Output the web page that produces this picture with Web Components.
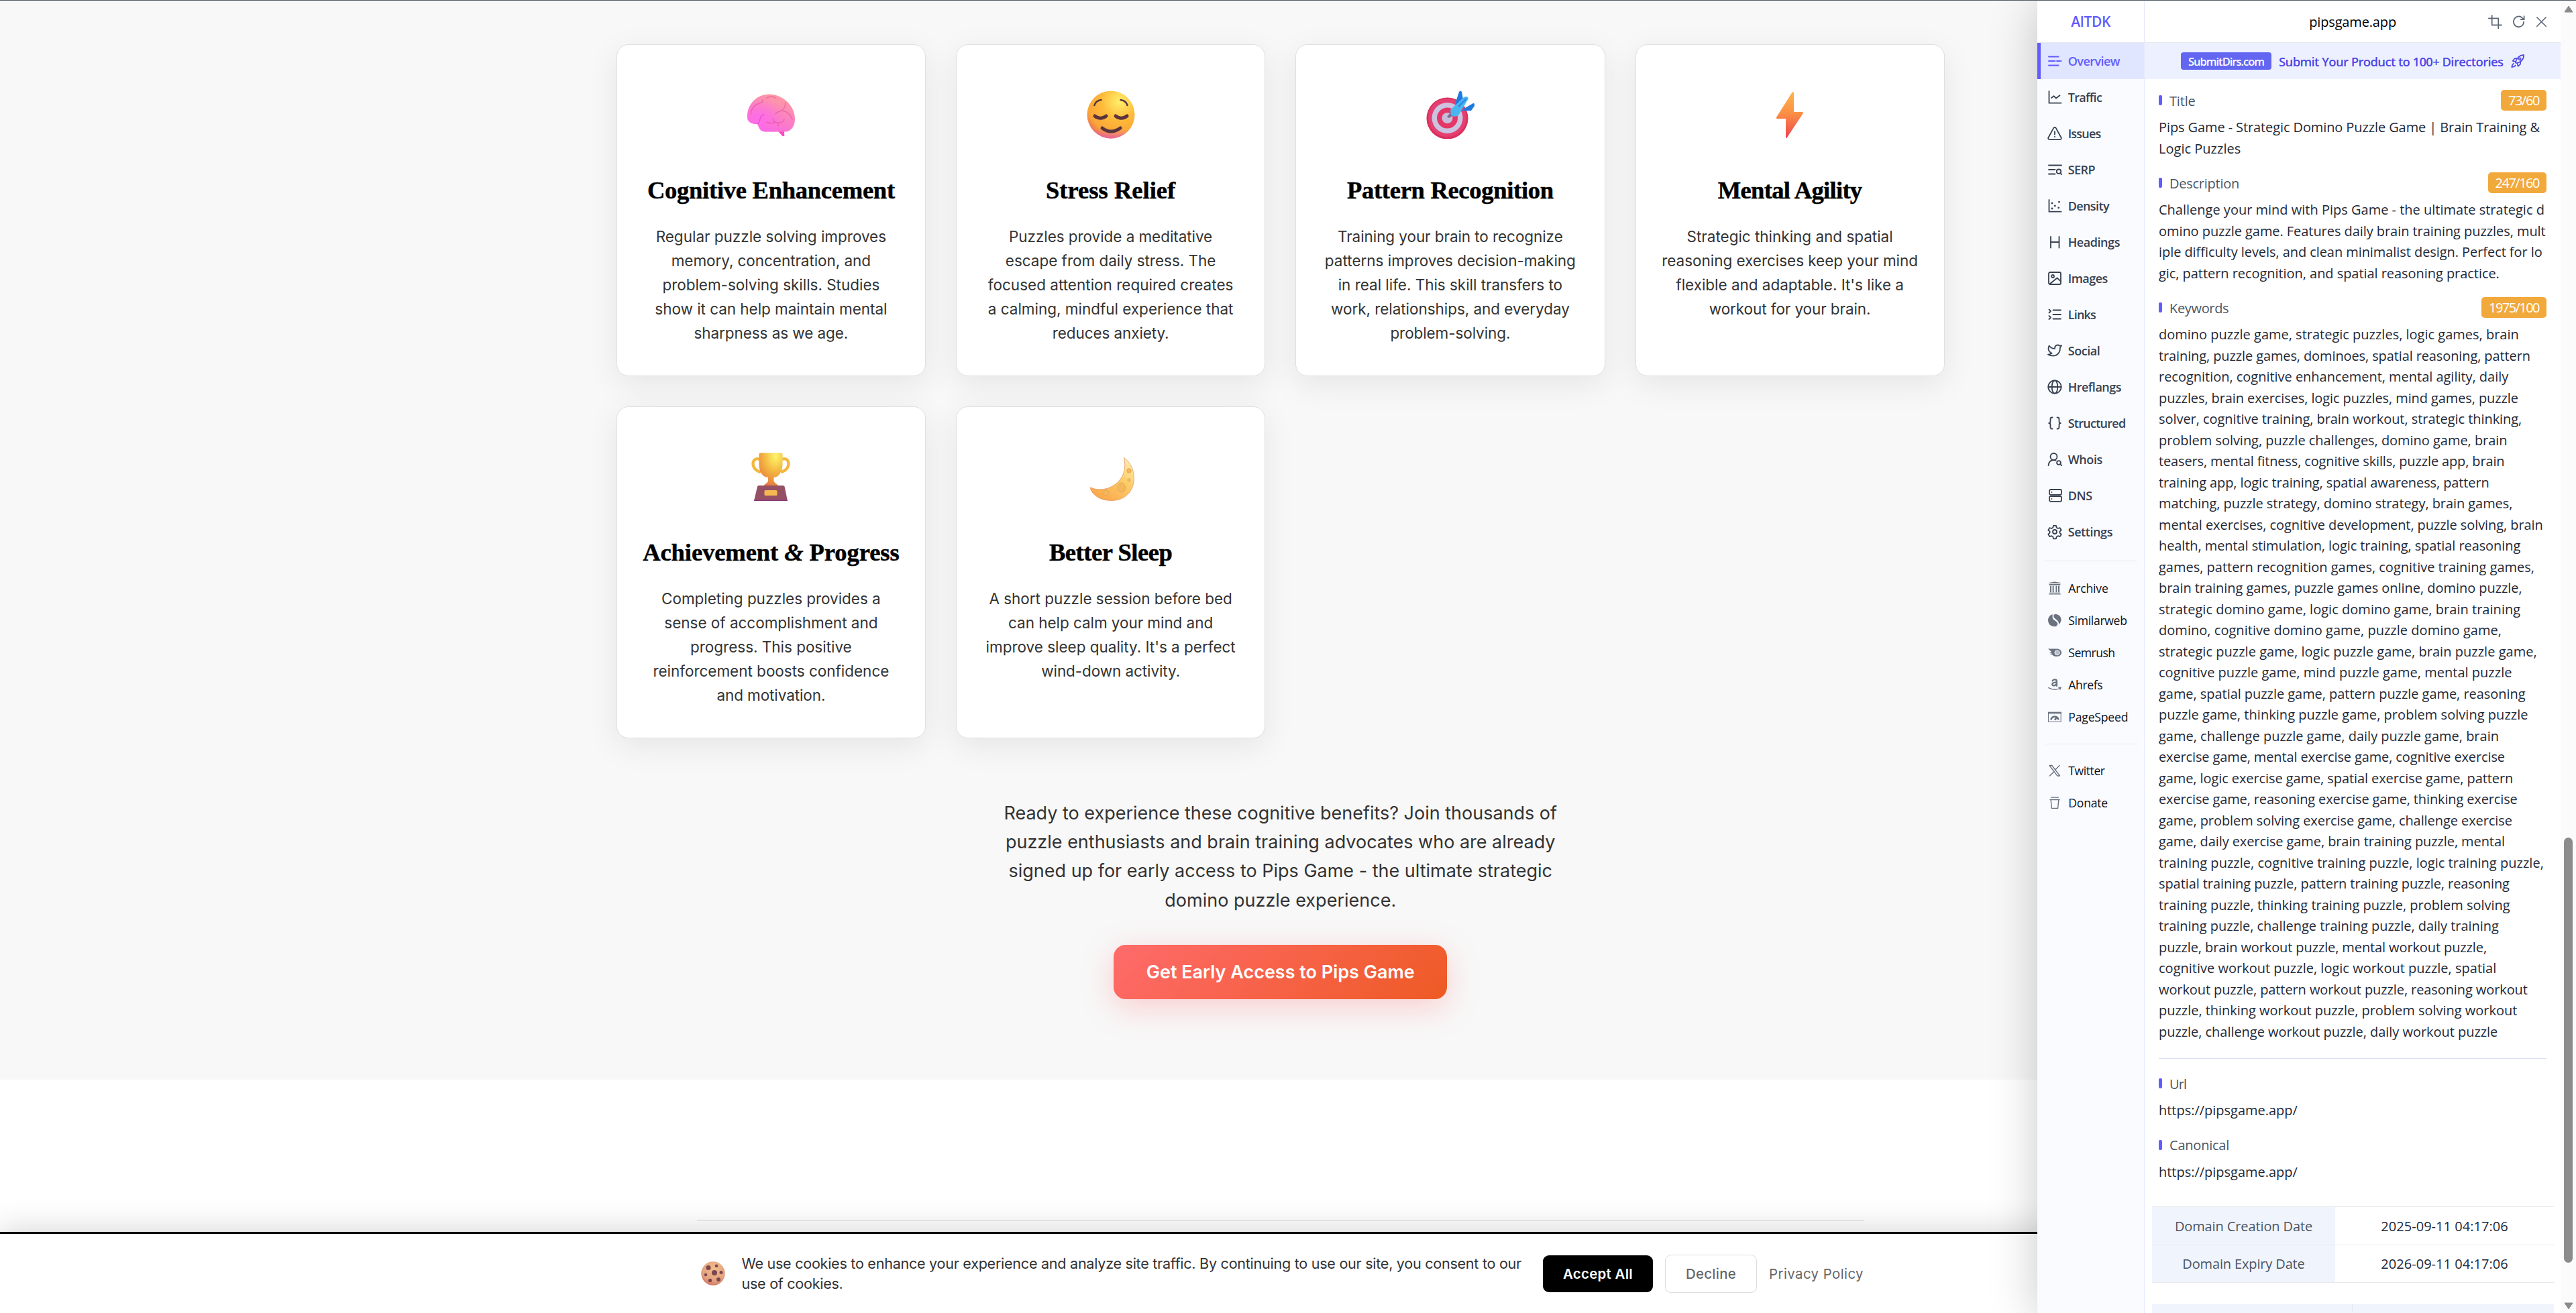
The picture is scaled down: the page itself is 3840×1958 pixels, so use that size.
<!DOCTYPE html>
<html lang="en">
<head>
<meta charset="utf-8">
<title>Pips Game</title>
<style>
html,body{margin:0;height:1958px;overflow:hidden}
body{font-family:Inter,sans-serif;background:#fff;width:3840px}
</style>
</head>
<body>
<pips-app></pips-app>
<script>
const define=(name,html,setup)=>customElements.define(name,class extends HTMLElement{
  constructor(){super();this.attachShadow({mode:'open'});}
  connectedCallback(){
    if(this.ready)return;this.ready=true;
    this.shadowRoot.innerHTML=typeof html==='function'?html(this):html;
    if(setup)setup(this);
  }
});

/* ---------- pictures ---------- */
const EMOJI={
brain:`<defs><linearGradient id="a" x1=".75" y1="0" x2=".3" y2="1"><stop offset="0" stop-color="#ff9e9e"/><stop offset=".45" stop-color="#fb86bd"/><stop offset="1" stop-color="#fb67e2"/></linearGradient><radialGradient id="b" cx=".25" cy=".65" r=".5"><stop offset="0" stop-color="#ff6ce8"/><stop offset="1" stop-color="#ff6ce8" stop-opacity="0"/></radialGradient></defs>
<path d="M46 60h10l.3 7.500q-2.800 2-4.500-1.500z" fill="#fb4bbd"/>
<path d="M1 39C1 20 15 5.500 34 5.500S72 22 72 42c0 12-6 19.500-16 19.500H28c-7 0-10-5-11.500-11.500C7 50.500 1 47 1 39z" fill="url(#a)"/><path d="M1 39C1 20 15 5.500 34 5.500S72 22 72 42c0 12-6 19.500-16 19.500H28c-7 0-10-5-11.500-11.500C7 50.500 1 47 1 39z" fill="url(#b)"/>
<g fill="none" stroke="#e8549c" stroke-width="1.500" stroke-linecap="round" opacity=".65"><path d="M6 35c1-8 6-14 13-16 4-1 7-3 4-5M30 11q7-4 13 0M58 18q-1 10-6 12-6 1-9 5M53 30q11 2 15 13M30 47q8 4 13-1M39 42q2 7 9 6 6 0 8-5M47 48v5"/><path d="M16 50c6-3 1-12 10-14" stroke="#d94bd0"/></g>`,
calm:`<defs><radialGradient id="a" cx=".68" cy=".22" r=".85"><stop offset="0" stop-color="#fff06b"/><stop offset=".45" stop-color="#ffba3a"/><stop offset=".8" stop-color="#fba637"/><stop offset="1" stop-color="#e76b5f"/></radialGradient><linearGradient id="b" x1="0" y1="0" x2="0" y2="1"><stop offset=".8" stop-color="#e85fb0" stop-opacity="0"/><stop offset="1" stop-color="#e85fb0" stop-opacity=".8"/></linearGradient></defs>
<circle cx="36" cy="36" r="35.500" fill="url(#a)"/><circle cx="36" cy="36" r="35.500" fill="url(#b)"/>
<g fill="none" stroke="#59343f" stroke-linecap="round"><path d="M11.500 22q2-7 10-8M60.500 22q-2-7-10-8" stroke-width="2.600"/><path d="M12 38q8.500 6.500 17 0M43 38q8.500 6.500 17 0" stroke-width="5"/><path d="M23 56q13 10 27 0" stroke-width="5"/></g>`,
target:`<circle cx="31.500" cy="41.500" r="31" fill="#d8315e"/><circle cx="31.500" cy="40.500" r="28.500" fill="#e53e70"/><circle cx="31.500" cy="41" r="23" fill="#cbc3df"/><circle cx="31.500" cy="41" r="15.500" fill="#e53668"/><circle cx="31.500" cy="41" r="8" fill="#c6bddb"/>
<path d="M31 39l8-9 4 5-9 6z" fill="#7d6a91"/><path d="M44 17L49 2q2-3 4 0l2 11-10 16zM56 27l14-8q3 0 2 4l-5 7-14 0z" fill="#1f79df"/><path d="M36 29L56 10q6-3 7 2L48 37q-7 4-11-1z" fill="#4ab6f0"/><path d="M48 24L60 12" stroke="#2a8be8" stroke-width="2.500"/>`,
bolt:`<defs><linearGradient id="a" x1="0" y1="0" x2="0" y2="1"><stop offset="0" stop-color="#ffb24a"/><stop offset=".45" stop-color="#fb9145"/><stop offset="1" stop-color="#ee4350"/></linearGradient></defs><path d="M39 3.500q1-1.700 2-1.500 1 .3 1 2V32h13q1.500.3.800 2L32 70q-1 1.500-2 .800V42H17q-1.800-.5-1-2z" fill="url(#a)"/>`,
trophy:`<defs><radialGradient id="a" cx=".7" cy=".1" r="1"><stop offset="0" stop-color="#fff56a"/><stop offset=".5" stop-color="#f2b440"/><stop offset="1" stop-color="#e5723f"/></radialGradient></defs>
<path d="M19 10c-11-5-15 15 2 19M53 10c11-5 15 15-2 19" fill="none" stroke="#f3b83d" stroke-width="4.200"/>
<path d="M18.500 2q0-1.500 2-1.500h31q2 0 2 1.500v16c0 10-6 19-13 19v5c0 3 6 5 6 7H26c0-2 6-4 6-7v-5c-8 0-13.500-9-13.500-19z" fill="url(#a)"/>
<path d="M18 49q-1.500 0-2 1.500L11 72h50l-4.500-21.500Q56 49 54 49z" fill="#955063"/><path d="M11.500 70h49l.5 2H11z" fill="#8b3c78"/><rect x="26.500" y="56" width="19" height="8" rx="1.500" fill="#f6b851"/>`,
moon:`<defs><linearGradient id="a" x1=".9" y1="0" x2=".2" y2="1"><stop offset="0" stop-color="#fff0b0"/><stop offset=".45" stop-color="#fccb67"/><stop offset="1" stop-color="#fba44b"/></linearGradient></defs>
<path d="M55.500 7.500c24 17 20 64-19 64C20 71.500 8 63 5 52.500q.8-1 2 0C30 62 64 43 55.500 7.500z" fill="url(#a)" stroke="#e59763" stroke-width=".8"/><g fill="#f4b85b" stroke="#e0a250" stroke-width=".7"><ellipse cx="51.500" cy="52" rx="6" ry="7"/><circle cx="29" cy="60" r="4"/><circle cx="63" cy="27" r="3.300"/><circle cx="63" cy="41" r="2.200"/></g>`,
cookie:`<defs><radialGradient id="a" cx=".55" cy=".3" r=".75"><stop offset="0" stop-color="#f2bc8c"/><stop offset=".7" stop-color="#e2a17e"/><stop offset="1" stop-color="#cf6a5e"/></radialGradient></defs><circle cx="36" cy="36" r="35.500" fill="url(#a)"/><g fill="#7a4650"><circle cx="22" cy="19" r="7"/><circle cx="46" cy="13.500" r="4.500"/><circle cx="40" cy="34" r="8"/><circle cx="60" cy="33" r="5"/><circle cx="14" cy="40" r="4.500"/><circle cx="27" cy="57" r="5.500"/><circle cx="52" cy="54" r="6"/></g>`};
define('emoji-pic',el=>`<style>:host{display:block;width:72px;height:72px;flex:none}svg{display:block;width:100%;height:100%}</style><svg viewBox="0 0 72 72">${EMOJI[el.getAttribute('name')]}</svg>`);

const ICON={
overview:'<path d="M3 5.500h14.500M3 12h9.500M15 12h6.500M3 18.500h14.500"/>',
traffic:'<path d="M3.500 3v17.700H21.500M7 13l3.500-2.800L14 13.500l5.500-4.300"/>',
issues:'<path d="M10.300 3.900L2.400 18.200a2 2 0 0 0 1.700 2.900h15.800a2 2 0 0 0 1.700-2.900L13.700 3.900a2 2 0 0 0-3.400 0zM12 9v4.500M12 16.700v.4"/>',
serp:'<path d="M3 5.500h19M3 12h9.500M3 18.500h9.500"/><circle cx="18" cy="14.700" r="3.200"/><path d="M20.300 17l2 2.200"/>',
density:'<path d="M3.500 3v17.700H21.500"/><g fill="currentColor" stroke="none"><circle cx="8" cy="8" r="1.400"/><circle cx="18.500" cy="6.200" r="1.400"/><circle cx="12.300" cy="12" r="1.400"/><circle cx="8" cy="16" r="1.400"/><circle cx="17.700" cy="14.800" r="1.400"/></g>',
headings:'<path d="M6 4v16.500M18.500 4v16.500M6 12h12.500"/>',
images:'<rect x="3" y="3" width="18" height="18" rx="2"/><circle cx="9" cy="9" r="2"/><path d="M4.500 20.500L15.500 11.500 21 16.500"/>',
links:'<path d="M9.500 5.500h11.500M9.500 12h11.500M9.500 18.500h11.500M3.500 4.500l2.500 2.500-2.500 2.500M3.500 14l2.500 2.500-2.500 2.500"/>',
social:'<path d="M22 4c-1 .5-2 .7-3 .6-1.300-1.300-3-1.300-4.500-.7-1.600.8-2.500 2.200-2.400 4.200v.8c-3.500.1-6.500-1.500-8.500-4.300 0 0-4.200 7.600 4 11.200-1.600 1.100-3.500 1.900-5.600 1.800 8.500 4.600 17.500.8 17.900-8.300 0-.8 0-1.300-.1-1.600C20.900 6.500 21.600 5.400 22 4z"/>',
globe:'<circle cx="12" cy="12" r="9.700"/><ellipse cx="12" cy="12" rx="4.300" ry="9.700"/><path d="M2.500 12h19"/>',
braces:'<path d="M8.500 3.500H8c-1.700 0-2.500.9-2.500 2.500v3.500c0 1.500-.7 2.500-2.300 2.500 1.600 0 2.300 1 2.300 2.500V18c0 1.600.8 2.500 2.500 2.500h.5M15.500 3.500h.5c1.700 0 2.500.9 2.500 2.500v3.500c0 1.500.7 2.500 2.300 2.500-1.600 0-2.300 1-2.300 2.500V18c0 1.600-.8 2.500-2.500 2.500h-.5"/>',
whois:'<circle cx="10.500" cy="8" r="5"/><path d="M2.500 21c.6-5 3.700-8 8-8 1 0 2 .2 3 .5"/><circle cx="18" cy="17" r="2.900"/><path d="M20.200 19.200l2 2"/>',
dns:'<rect x="4" y="3" width="18" height="7.800" rx="2"/><rect x="4" y="13" width="18" height="7.800" rx="2"/><path d="M7.500 7v.1M7.500 17v.1"/>',
settings:'<circle cx="12" cy="12" r="3"/><path d="M10 2.800h4l.7 3 2 1.200 3-.9 2 3.400-2.300 2.100v2l2.300 2.100-2 3.400-3-.9-2 1.200-.7 3h-4l-.7-3-2-1.200-3 .9-2-3.400 2.300-2.100v-2L2.300 9.500l2-3.400 3 .9 2-1.200z"/>',
crop:'<path d="M6.500 1v16.500H23M1 6h16.500v17"/>',
refresh:'<path d="M20.700 12a8.700 9 0 1 1-2.700-6.700l3 2.700M21.300 2.500V8h-5.800"/>',
close:'<path d="M3.500 3.500l17 17M20.500 3.500l-17 17"/>',
rocket:'<path d="M8.500 14.500C10 8 14 2.500 22 2c0 7-4.500 12-12 13.500zM8.500 13L4 12l3-4 4-.5M11.500 15.500l1 5 4-3.500.3-4M5.500 16c-2 1-2.700 3-3 6 3-.3 5-1 6-3"/><circle cx="15.500" cy="8.500" r="1.700"/>',
archive:'<g fill="currentColor" stroke="none"><path d="M1.500 2.500L12 .5l10.500 2v1.200h-21zM2 4.700h20v2.300H2zM3.500 8H6v11.500H3.500zM8 8h2.300v11.500H8zM13.700 8H16v11.500h-2.300zM18 8h2.500v11.500H18zM2.500 20h19v1H2.500zM1.500 21.800h21v1.500h-21z"/></g>',
similarweb:'<g fill="currentColor" stroke="none"><path d="M8 1.200C-2.500 4.500-2 18.500 6 22c5 2.500 12 1 11-4.500-1-4-8.500-5.500-9-10.500-.2-2.500 0-4 0-5.800z"/><path d="M12.500.8c-3 1.200-3.500 4.200-1.500 6.700s9.500 5.500 8 12C26 15 25.500 1.500 12.500.8z"/></g>',
semrush:'<g fill="currentColor" stroke="none"><path fill-rule="evenodd" d="M0 5.500H17a7 6.700 0 0 1 0 13.500c-4 1-8-.5-9.500-3L3 14.500l4-.6L2 11l4.500.2zM16.500 7.500a5 4.800 0 1 0 .01 0z"/><circle cx="17" cy="12.300" r="3.800" opacity=".45"/></g>',
ahrefs:'<path d="M8 5c2-3 7.500-3 7.500 1v8M15.500 8C5 7 6.500 14.500 11 13.500c2.500-.5 4.500-2 4.500-5.500" stroke-width="2.800"/><path d="M1 17.500c7 4 15 4 21 .5M19 17h4l-1.500 3.500" stroke-width="1.600"/>',
pagespeed:'<path d="M1 4h22v17H1z" stroke-width="1.200"/><path d="M1 4.800h22" stroke-width="3"/><path d="M5.500 17.500a6.500 6 0 0 1 13 0M12 17.500l4-5" stroke-width="3.200" stroke-linecap="butt"/>',
twitter:'<path d="M2.500 3H7l14 18.500h-4.500zM20.500 3l-8 8M10.500 14L3 21.500"/>',
donate:'<path d="M5.500 2.500h13M3.500 6.500h17M5 7l1.500 15h11L19 7" stroke-width="1.700"/>'};
define('ui-icon',el=>`<style>:host{display:block;width:24px;height:24px;flex:none}svg{display:block;width:100%;height:100%}</style><svg viewBox="0 0 24 24" fill="none" stroke="currentColor" stroke-width="${el.getAttribute('stroke')||1.8}" stroke-linecap="round" stroke-linejoin="round">${ICON[el.getAttribute('name')]}</svg>`);

/* ---------- landing page ---------- */
const ft=(t,w)=>`<fit-text w="${w}">${t}</fit-text>`;
const lines=a=>a.map(([t,w])=>`<div>${ft(t,w)}</div>`).join('');

define('benefit-card',`<style>
:host{display:flex;flex-direction:column;align-items:center;box-sizing:border-box;height:495px;border:1px solid #e0e0e0;border-radius:18px;background:#fff;padding-top:67.500px;box-shadow:0 12px 48px rgba(0,0,0,.08);text-align:center}
.t{height:54px;margin-top:50px;font:700 36.500px/54px "Liberation Serif",serif;color:#000;-webkit-text-stroke:.5px #000;white-space:nowrap}
.b{margin-top:24px;font-size:22.500px;line-height:36px;color:#333;white-space:nowrap}
</style><slot name="icon"></slot><div class="t"><slot name="title"></slot></div><div class="b"><slot></slot></div>`);

const K=.6505;
const CARDS=[
['brain','Cognitive Enhancement',567,[['Regular puzzle solving improves',528],['memory, concentration, and',457],['problem-solving skills. Studies',498],['show it can help maintain mental',532],['sharpness as we age.',353]]],
['calm','Stress Relief',297,[['Puzzles provide a meditative',466],['escape from daily stress. The',482],['focused attention required creates',562],['a calming, mindful experience that',562],['reduces anxiety.',267]]],
['target','Pattern Recognition',473,[['Training your brain to recognize',516],['patterns improves decision-making',575],['in real life. This skill transfers to',514],['work, relationships, and everyday',547],['problem-solving.',275]]],
['bolt','Mental Agility',330,[['Strategic thinking and spatial',472],['reasoning exercises keep your mind',587],["flexible and adaptable. It's like a",522],['workout for your brain.',370]]],
['trophy','Achievement <i>&amp;</i> Progress',588,[['Completing puzzles provides a',502],['sense of accomplishment and',489],['progress. This positive',370],['reinforcement boosts confidence',541],['and motivation.',249]]],
['moon','Better Sleep',282,[['A short puzzle session before bed',557],['can help calm your mind and',469],["improve sleep quality. It's a perfect",572],['wind-down activity.',318]]]];

define('benefits-section',()=>`<style>
:host{display:block;box-sizing:border-box;height:1610px;padding-top:66px;background:#f8f8f8}
.g{display:grid;grid-template-columns:repeat(4,1fr);gap:45px;width:1980px;margin:0 auto}
.cta{display:flex;flex-direction:column;align-items:center;margin-top:90px}
.p{font-size:27px;line-height:43.200px;color:#333;text-align:center;white-space:nowrap}
.btn{display:flex;align-items:center;justify-content:center;width:497px;height:81px;margin-top:45px;border-radius:18px;background:linear-gradient(135deg,#ff6b6b,#ee5a24);box-shadow:0 12px 48px rgba(255,107,107,.3);color:#fff;font-weight:600;font-size:27px;white-space:nowrap}
</style><div class="g">${CARDS.map(([i,t,w,b])=>`<benefit-card><emoji-pic slot="icon" name="${i}"></emoji-pic><span slot="title">${ft(t,w*K)}</span>${lines(b.map(([s,x])=>[s,x*K]))}</benefit-card>`).join('')}</div>
<div class="cta"><div class="p">${lines([['Ready to experience these cognitive benefits? Join thousands of',824.5],['puzzle enthusiasts and brain training advocates who are already',819.5],['signed up for early access to Pips Game - the ultimate strategic',810.5],['domino puzzle experience.',345]])}</div><div class="btn">${ft('Get Early Access to Pips Game',400)}</div></div>`);

define('page-footer',`<style>:host{display:block;padding-top:210px}hr{width:1740px;height:1px;margin:0 auto;border:0;background:#ddd}</style><hr>`);

define('cookie-banner',`<style>
:host{display:flex;align-items:flex-start;box-sizing:border-box;height:121px;border-top:3px solid #000;background:#fff;box-shadow:0 -6px 45px rgba(0,0,0,.15);padding:31px 0 0 1045px;color:#333;white-space:nowrap}
emoji-pic{width:36px;height:36px;margin-top:10px}
.t{margin:-2px 0 0 24.500px;width:1194.500px;font-size:21.600px;line-height:30.240px}
.b{box-sizing:border-box;display:flex;align-items:center;justify-content:center;border-radius:9px;height:57px;font-size:20.400px;color:#666;font-weight:500}
.ok{width:164px;height:55px;margin-top:1px;background:#000;color:#fff;font-weight:600}
.no{width:137px;margin-left:18px;border:1px solid #ddd}
.pp{margin-left:18px;font-weight:400}
</style><emoji-pic name="cookie"></emoji-pic><div class="t">${lines([['We use cookies to enhance your experience and analyze site traffic. By continuing to use our site, you consent to our',1162.5],['use of cookies.',151]])}</div><div class="b ok">${ft('Accept All',104)}</div><div class="b no">${ft('Decline',75)}</div><div class="b pp">${ft('Privacy Policy',141)}</div>`);

/* ---------- side panel ---------- */
define('nav-item',el=>`<style>
:host{display:flex;align-items:center;box-sizing:border-box;height:54px;padding-left:14px;gap:7.700px;color:#374151;font-weight:600;font-size:18px;white-space:nowrap}
:host([active]){background:#e0e6ff;color:#635bff;border-left:5px solid #635bff;padding-left:9px}
:host([small]){height:48px;color:#0b0f1a;font-weight:400;font-size:17.600px;padding-left:16px;gap:10.300px}
:host([small]) ui-icon{width:20px;height:20px;color:#6b7280}
</style><ui-icon name="${el.getAttribute('icon')}" ${el.hasAttribute('small')?'stroke="1.700"':''}></ui-icon><slot></slot>`);

const NAV=[['overview','Overview',77.3],['traffic','Traffic',50.5],['issues','Issues',48.7],['serp','SERP',40.5],['density','Density',61.3],['headings','Headings',77.3],['images','Images',59],['links','Links',41.3],['social','Social',47.7],['globe','Hreflangs',79.3],['braces','Structured',85.7],['whois','Whois',51.3],['dns','DNS',36],['settings','Settings',66.3]];
const EXT=[['archive','Archive',59.3],['similarweb','Similarweb',87.3],['semrush','Semrush',69.3],['ahrefs','Ahrefs',51],['pagespeed','PageSpeed',89]];
const SOC=[['twitter','Twitter',54.3],['donate','Donate',58.7]];
const item=x=>([i,t,w])=>`<nav-item icon="${i}" ${x} ${i==='overview'?'active':''}>${ft(t,w)}</nav-item>`;

define('side-nav',()=>`<style>
:host{display:block;box-sizing:border-box;width:160px;background:#fafbff;border-right:1px solid #e6e9fb}
.logo{display:flex;align-items:center;justify-content:center;height:63px;border-bottom:1px solid #e5e7eb;background:#fff;color:#635bff;font-weight:600;font-size:21px}
.hr{height:1px;margin:16px 11px 15.500px;background:#e5e7eb}
</style><div class="logo">${ft('AITDK',58.7)}</div>${NAV.map(item('')).join('')}<div class="hr"></div>${EXT.map(item('small')).join('')}<div class="hr"></div>${SOC.map(item('small')).join('')}`);

define('meta-section',`<style>
:host{display:block;padding-bottom:20px;color:#1f2937}
.h{display:flex;align-items:center;height:31px;color:#4b5563;white-space:nowrap}
.m{width:5px;height:15px;border-radius:2px;background:#635bff;margin-right:11px}
.s{flex:1}
.l{padding-top:1px}
::slotted([slot=count]){display:flex;align-items:center;height:31px;padding:0 11px;border-radius:5px;background:#f2a93b;color:#fff}
.b{margin-top:9px;line-height:31.500px;white-space:nowrap}
</style><div class="h"><i class="m"></i><span class="l"><slot name="label"></slot></span><i class="s"></i><slot name="count"></slot></div><div class="b"><slot></slot></div>`);

const S=.41454,P=.40816;
const KW=`domino puzzle game, strategic puzzles, logic games, brain|1361
training, puzzle games, dominoes, spatial reasoning, pattern|1403
recognition, cognitive enhancement, mental agility, daily|1323
puzzles, brain exercises, logic puzzles, mind games, puzzle|1359
solver, cognitive training, brain workout, strategic thinking,|1372
problem solving, puzzle challenges, domino game, brain|1319
teasers, mental fitness, cognitive skills, puzzle app, brain|1309
training app, logic training, spatial awareness, pattern|1253
matching, puzzle strategy, domino strategy, brain games,|1338
mental exercises, cognitive development, puzzle solving, brain|1449
health, mental stimulation, logic training, spatial reasoning|1367
games, pattern recognition games, cognitive training games,|1418
brain training games, puzzle games online, domino puzzle,|1373
strategic domino game, logic domino game, brain training|1367
domino, cognitive domino game, puzzle domino game,|1298
strategic puzzle game, logic puzzle game, brain puzzle game,|1427
cognitive puzzle game, mind puzzle game, mental puzzle|1336
game, spatial puzzle game, pattern puzzle game, reasoning|1385
puzzle game, thinking puzzle game, problem solving puzzle|1395
game, challenge puzzle game, daily puzzle game, brain|1288
exercise game, mental exercise game, cognitive exercise|1310
game, logic exercise game, spatial exercise game, pattern|1340
exercise game, reasoning exercise game, thinking exercise|1356
game, problem solving exercise game, challenge exercise|1337
game, daily exercise game, brain training puzzle, mental|1310
training puzzle, cognitive training puzzle, logic training puzzle,|1452
spatial training puzzle, pattern training puzzle, reasoning|1327
training puzzle, thinking training puzzle, problem solving|1329
training puzzle, challenge training puzzle, daily training|1288
puzzle, brain workout puzzle, mental workout puzzle,|1244
cognitive workout puzzle, logic workout puzzle, spatial|1279
workout puzzle, pattern workout puzzle, reasoning workout|1393
puzzle, thinking workout puzzle, problem solving workout|1355
puzzle, challenge workout puzzle, daily workout puzzle|1284`.split('\n').map(l=>{const[t,x]=l.split('|');return[t,(x-46)*P]});
const sec=(label,lw,count,cw,body)=>`<meta-section><span slot="label">${ft(label,lw)}</span>${count?`<span slot="count">${ft(count,cw)}</span>`:''}${lines(body)}</meta-section>`;

define('panel-main',()=>`<style>
:host{display:block;width:620px;height:1958px;overflow:hidden;background:#fff;font-size:20px}
.top{display:flex;align-items:center;justify-content:flex-end;height:63px;border-bottom:1px solid #e5e7eb;color:#000}
.host{margin-right:137px;padding-top:2px}
.tools{display:flex;gap:14px;margin-right:19px;padding-top:2px;color:#5b6675}
.tools ui-icon{width:21px;height:21px}.tools ui-icon:last-child{width:19px}
.ad{display:flex;align-items:center;height:54px;padding-left:54px;background:#edf1ff;color:#4f46e5;font-weight:600;font-size:18.500px;white-space:nowrap}
.ad b{display:flex;align-items:center;justify-content:center;width:135px;height:26px;margin-right:11px;border-radius:4px;background:#6366f1;color:#fff;font-weight:600;font-size:16.500px}
.ad ui-icon{width:22px;height:22px;margin-left:10px}
.c{padding:16px 21px 0}
.c hr{height:1px;border:0;background:#d9dff0;margin:4px 0 21px}
.tb{margin:16px 10px 0 11px;color:#1f2937;border-top:1px solid #e8e8ec}
.r{display:flex;height:56px;border-bottom:1px solid #e8e8ec;white-space:nowrap}
.r:last-child{height:55px}
.r div{flex:1;display:flex;align-items:center;justify-content:center}
.r .k{flex:none;width:273px;background:#f0f4fc;color:#4b5563}
.t2{display:flex;height:40px;margin:32px 10px 0 11px;background:#f0f4fc}
.t2 i{width:298px;border-right:1px solid #e5e7eb}
</style>
<div class="top"><span class="host">${ft('pipsgame.app',129.8)}</span><div class="tools"><ui-icon name="crop" stroke="2"></ui-icon><ui-icon name="refresh" stroke="2"></ui-icon><ui-icon name="close" stroke="2"></ui-icon></div></div>
<div class="ad"><b>${ft('SubmitDirs.com',113.2)}</b>${ft('Submit Your Product to 100+ Directories',334.5)}<ui-icon name="rocket"></ui-icon></div>
<div class="c">
${sec('Title',38.6,'73/60',46,[['Pips Game - Strategic Domino Puzzle Game | Brain Training &amp;',1370*S],['Logic Puzzles',295*S]])}
${sec('Description',104,'247/160',65.5,[['Challenge your mind with Pips Game - the ultimate strategic d',1387*S],['omino puzzle game. Features daily brain training puzzles, mult',1391*S],['iple difficulty levels, and clean minimalist design. Perfect for lo',1379*S],['gic, pattern recognition, and spatial reasoning practice.',1225*S]])}
${sec('Keywords',88.3,'1975/100',75,KW)}
<hr>
${sec('Url',25.3,'',0,[['https://pipsgame.app/',206.9]])}
${sec('Canonical',89.1,'',0,[['https://pipsgame.app/',206.9]])}
</div>
<div class="tb"><div class="r"><div class="k">${ft('Domain Creation Date',205.2)}</div><div>${ft('2025-09-11 04:17:06',189.4)}</div></div><div class="r"><div class="k">${ft('Domain Expiry Date',182.4)}</div><div>${ft('2026-09-11 04:17:06',189.4)}</div></div></div>
<div class="t2"><i></i></div>`);

define('scroll-bar',`<style>
:host{display:flex;flex-direction:column;align-items:center;box-sizing:border-box;width:23px;height:1958px;padding:8px 0 5px;background:#fbfbfb}
svg{display:block;width:14px;height:11px}
.thumb{width:13px;height:634px;border-radius:7px;background:#8b8b8b;margin:1230px 0 59px}
</style><svg viewBox="0 0 14 11"><path d="M7 1l6 9H1z" fill="#8b8b8b" stroke="#8b8b8b" stroke-linejoin="round"/></svg><div class="thumb"></div><svg viewBox="0 0 14 11"><path d="M7 10l6-9H1z" fill="#8b8b8b" stroke="#8b8b8b" stroke-linejoin="round"/></svg>`);

define('seo-panel',`<style>:host{display:flex;height:1958px;font-family:"Open Sans",sans-serif;box-shadow:0 6px 66px rgba(0,0,0,.22)}</style><side-nav></side-nav><panel-main></panel-main><scroll-bar></scroll-bar>`);

define('pips-app',`<style>
:host{display:block;position:relative;width:3840px;height:1958px;overflow:hidden}
main{width:3817.500px}
cookie-banner{position:absolute;left:0;right:0;bottom:0}
seo-panel{position:absolute;top:0;right:0}
.edge{position:absolute;left:0;right:0;top:0;height:1px;background:#4f5f66}
</style><main><benefits-section></benefits-section><page-footer></page-footer></main><cookie-banner></cookie-banner><seo-panel></seo-panel><div class="edge"></div>`);

/* Single-line text whose tracking is adjusted so that it spans the width in its "w" attribute. */
define('fit-text','<style>:host{display:inline-block;white-space:nowrap}</style><slot></slot>',el=>{
  const w=+el.getAttribute('w'),now=el.getBoundingClientRect().width;
  if(w&&now)el.style.letterSpacing=((w-now)/el.textContent.length).toFixed(3)+'px';
});
</script>
</body>
</html>
